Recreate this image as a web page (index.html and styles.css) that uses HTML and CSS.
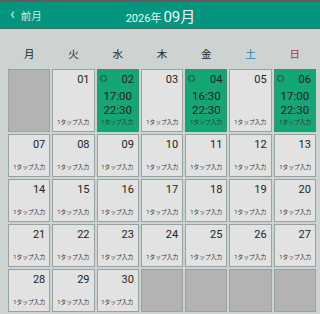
FILE: index.html
```html
<!DOCTYPE html>
<html lang="ja">
<head>
    <meta charset="UTF-8">
    <meta name="viewport" content="width=device-width, initial-scale=1.0">
    <title>カレンダー</title>
    <link rel="stylesheet" href="styles.css">
</head>
<body>
    <div class="header">
        <a class="prev"><span class="chev">&#8249;</span>前月</a>
        <div class="title"><span class="year">2026年</span><span class="month">09月</span></div>
    </div>
    <div class="week">
        <div>月</div><div>火</div><div>水</div><div>木</div><div>金</div><div class="sat">土</div><div class="sun">日</div>
    </div>
    <div class="grid">
        <div class="cell empty"></div>
        <div class="cell"><div class="num">01</div><div class="tap"><span>1タップ入力</span></div></div>
        <div class="cell on"><div class="top"><span class="mark"></span><span>02</span></div><div class="time">17:00<br>22:30</div><div class="tap"><span>1タップ入力</span></div></div>
        <div class="cell"><div class="num">03</div><div class="tap"><span>1タップ入力</span></div></div>
        <div class="cell on"><div class="top"><span class="mark"></span><span>04</span></div><div class="time">16:30<br>22:30</div><div class="tap"><span>1タップ入力</span></div></div>
        <div class="cell"><div class="num">05</div><div class="tap"><span>1タップ入力</span></div></div>
        <div class="cell on"><div class="top"><span class="mark"></span><span>06</span></div><div class="time">17:00<br>22:30</div><div class="tap"><span>1タップ入力</span></div></div>

        <div class="cell"><div class="num">07</div><div class="tap"><span>1タップ入力</span></div></div>
        <div class="cell"><div class="num">08</div><div class="tap"><span>1タップ入力</span></div></div>
        <div class="cell"><div class="num">09</div><div class="tap"><span>1タップ入力</span></div></div>
        <div class="cell"><div class="num">10</div><div class="tap"><span>1タップ入力</span></div></div>
        <div class="cell"><div class="num">11</div><div class="tap"><span>1タップ入力</span></div></div>
        <div class="cell"><div class="num">12</div><div class="tap"><span>1タップ入力</span></div></div>
        <div class="cell"><div class="num">13</div><div class="tap"><span>1タップ入力</span></div></div>

        <div class="cell"><div class="num">14</div><div class="tap"><span>1タップ入力</span></div></div>
        <div class="cell"><div class="num">15</div><div class="tap"><span>1タップ入力</span></div></div>
        <div class="cell"><div class="num">16</div><div class="tap"><span>1タップ入力</span></div></div>
        <div class="cell"><div class="num">17</div><div class="tap"><span>1タップ入力</span></div></div>
        <div class="cell"><div class="num">18</div><div class="tap"><span>1タップ入力</span></div></div>
        <div class="cell"><div class="num">19</div><div class="tap"><span>1タップ入力</span></div></div>
        <div class="cell"><div class="num">20</div><div class="tap"><span>1タップ入力</span></div></div>

        <div class="cell"><div class="num">21</div><div class="tap"><span>1タップ入力</span></div></div>
        <div class="cell"><div class="num">22</div><div class="tap"><span>1タップ入力</span></div></div>
        <div class="cell"><div class="num">23</div><div class="tap"><span>1タップ入力</span></div></div>
        <div class="cell"><div class="num">24</div><div class="tap"><span>1タップ入力</span></div></div>
        <div class="cell"><div class="num">25</div><div class="tap"><span>1タップ入力</span></div></div>
        <div class="cell"><div class="num">26</div><div class="tap"><span>1タップ入力</span></div></div>
        <div class="cell"><div class="num">27</div><div class="tap"><span>1タップ入力</span></div></div>

        <div class="cell"><div class="num">28</div><div class="tap"><span>1タップ入力</span></div></div>
        <div class="cell"><div class="num">29</div><div class="tap"><span>1タップ入力</span></div></div>
        <div class="cell"><div class="num">30</div><div class="tap"><span>1タップ入力</span></div></div>
        <div class="cell empty"></div>
        <div class="cell empty"></div>
        <div class="cell empty"></div>
        <div class="cell empty"></div>
    </div>
</body>
</html>
```
FILE: styles.css
```css
body{
    margin: 0;
    background-color: #cdd3d1;
    font-family: Roboto, "Noto Sans CJK JP", sans-serif;
    color: #222;
    overflow: hidden;
}
.header{
    height: 26px;
    border-top: 2px solid #56645f;
    border-bottom: 1px solid #56645f;
    background-color: #03957d;
    display: flex;
    align-items: center;
    position: relative;
}
.prev{
    color: #d6ece6;
    font-size: 10.5px;
    margin-left: 10px;
    display: flex;
    align-items: center;
}
.chev{
    font-size: 16px;
    margin-right: 6px;
    line-height: 16px;
    margin-top: -3px;
}
.title{
    position: absolute;
    left: 0;
    right: 0;
    text-align: center;
    color: #f2f8f6;
    padding-left: 1px;
}
.year{
    font-size: 11px;
    margin-right: 2px;
}
.month{
    font-size: 15px;
}
.week{
    height: 22px;
    padding: 18px 4px 0 8px;
    display: grid;
    grid-template-columns: repeat(7, minmax(0, 1fr));
    gap: 2px;
    font-size: 10.5px;
    line-height: 16px;
    text-align: center;
}
.sat{
    color: #2686ad;
}
.sun{
    color: #c61f2b;
}
.grid{
    padding: 0 4px 0 8px;
    display: grid;
    grid-template-columns: repeat(7, minmax(0, 1fr));
    grid-template-rows: 63px repeat(4, 43px);
    gap: 2px;
}
.cell{
    box-sizing: border-box;
    min-width: 0;
    border: 1px solid #97a3a3;
    background-color: #e2e2e2;
    display: flex;
    flex-direction: column;
    justify-content: space-between;
}
.cell.empty{
    background-color: #b3b3b3;
    border-color: #9aa3a3;
}
.cell.on{
    background-color: #14a674;
    border-color: #3e8f6e;
}
.num{
    text-align: right;
    font-size: 11px;
    line-height: 14px;
    padding: 3px 4px 0 0;
}
.top{
    display: flex;
    justify-content: space-between;
    align-items: center;
    font-size: 11px;
    line-height: 14px;
    padding: 3px 4px 0 2px;
}
.mark{
    width: 7px;
    height: 7px;
    border: 1.5px solid #1c4a33;
    border-radius: 50%;
    box-sizing: border-box;
    margin-top: -4px;
}
.time{
    text-align: center;
    font-size: 11.5px;
    line-height: 14px;
}
.tap{
    display: flex;
    justify-content: center;
    line-height: 8px;
    height: 8px;
    padding-bottom: 4px;
}
.tap span{
    flex: none;
    font-size: 8px;
    white-space: nowrap;
    color: #333;
    transform: scale(0.72);
}
```
